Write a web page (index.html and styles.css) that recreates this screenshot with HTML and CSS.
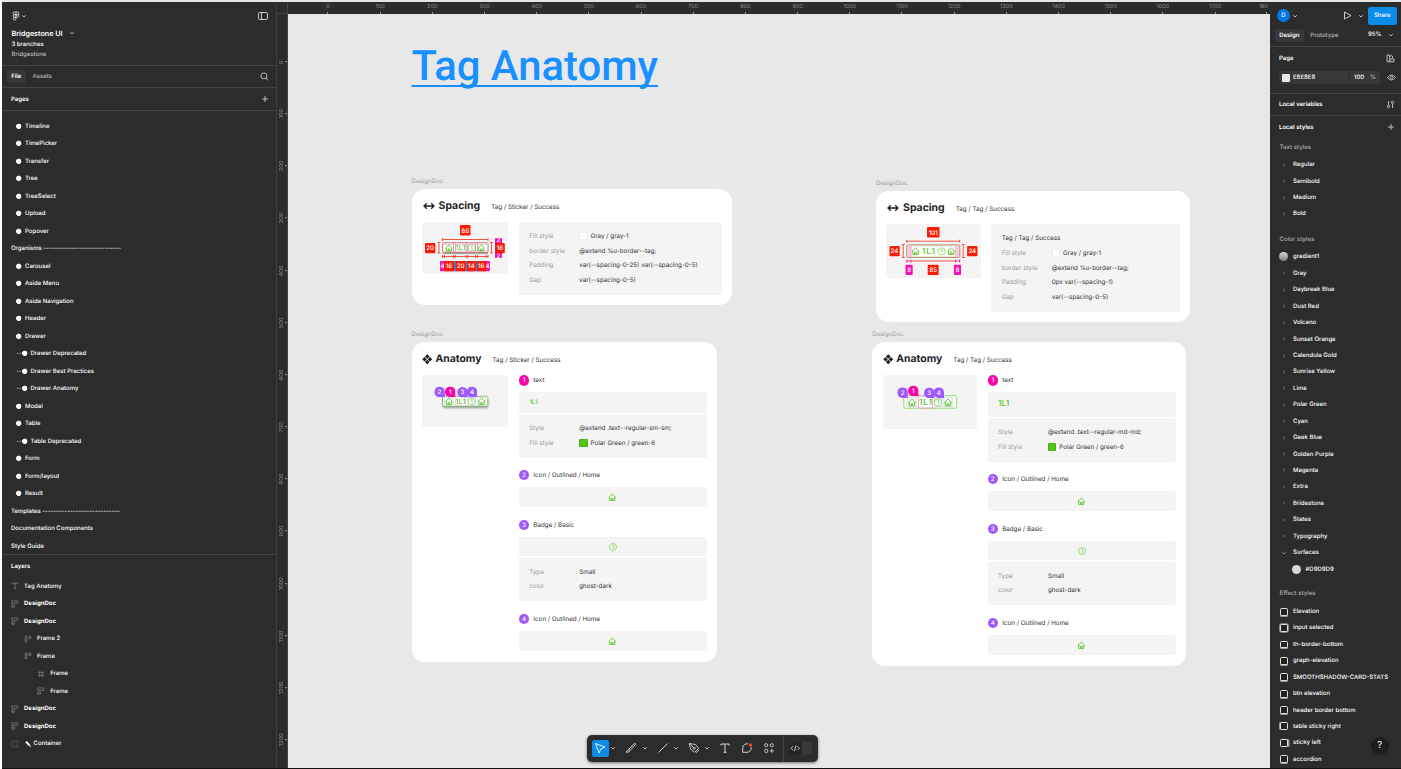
FILE: index.html
```html
<!DOCTYPE html>
<html lang="en">
<head>
<meta charset="utf-8">
<title>Bridgestone UI</title>
<link rel="stylesheet" href="styles.css">
</head>
<body>
<svg class="defs" aria-hidden="true">
  <symbol id="chev" viewBox="0 0 6 6"><path d="M1.3 2.3 3 4l1.7-1.7" fill="none" stroke="currentColor" stroke-width=".9"/></symbol>
  <symbol id="chev-r" viewBox="0 0 6 6"><path d="M2.2 1.5 3.7 3 2.2 4.5" fill="none" stroke="currentColor" stroke-width=".7"/></symbol>
  <symbol id="plus" viewBox="0 0 8 8"><path d="M4 1v6M1 4h6" stroke="currentColor" stroke-width=".8"/></symbol>
  <symbol id="home" viewBox="0 0 10 10"><path d="M.9 5.3 5 1.3l4.100 4M2 4.600V8.600h6V4.600M4.100 8.400V6.200h1.800V8.400" fill="none" stroke="currentColor" stroke-width="1" stroke-linejoin="round"/></symbol>
  <symbol id="hframe" viewBox="0 0 8 8"><path d="M.8 1h6v2.300h-6zM.8 5h2.600v2.200H.8z" fill="none" stroke="currentColor" stroke-width=".7"/></symbol>
  <symbol id="vframe" viewBox="0 0 8 8"><path d="M1.200 1.200h1.800v5.600H1.200zM5 1.200h1.800v2.300H5z" fill="none" stroke="currentColor" stroke-width=".7"/></symbol>
  <symbol id="grid" viewBox="0 0 8 8"><path d="M2.600 1v6M5.400 1v6M1 2.600h6M1 5.400h6" stroke="currentColor" stroke-width=".6"/></symbol>
  <symbol id="arrows" viewBox="0 0 12 8"><path d="M1.200 4h9.600M3.800 1.200 1 4l2.800 2.800M8.200 1.200 11 4 8.200 6.800" fill="none" stroke="currentColor" stroke-width="1.300"/></symbol>
  <symbol id="parts" viewBox="0 0 10 10"><path d="M5 .2 7.200 2.400 5 4.600 2.800 2.400zM5 5.400 7.200 7.600 5 9.800 2.800 7.600zM.2 5l2.200-2.200L4.600 5 2.400 7.200zM5.400 5l2.200-2.200L9.800 5 7.600 7.200z" fill="currentColor"/></symbol>
  <symbol id="pin" viewBox="0 0 11 11"><path d="M5.500 0A5.500 5.500 0 1 0 5.500 11H11V5.500A5.500 5.500 0 0 0 5.500 0z" fill="currentColor"/></symbol>
</svg>

<div class="app">
  <aside class="left">
    <header class="file-head">
      <div class="file-bar">
        <svg class="logo" viewBox="0 0 8 10"><path d="M4 1H2.400a1.350 1.350 0 0 0 0 2.700H4zM4 1h1.600a1.350 1.350 0 0 1 0 2.700H4M4 3.700H2.400a1.350 1.350 0 0 0 0 2.700H4zM5.500 3.700a1.350 1.350 0 1 1-.01 0M4 6.400H2.400A1.350 1.350 0 1 0 4 7.700z" fill="none" stroke="currentColor" stroke-width=".8"/></svg>
        <svg class="chev"><use href="#chev"/></svg>
        <svg class="panel-icon" viewBox="0 0 10 8"><rect x=".5" y=".5" width="9" height="7" rx="1.200" fill="none" stroke="currentColor" stroke-width=".9"/><path d="M3.500 .5v7" stroke="currentColor" stroke-width=".9"/></svg>
      </div>
      <div class="file-name">Bridgestone UI <svg class="chev"><use href="#chev"/></svg></div>
      <div class="branches">3 branches</div>
      <div class="team">Bridgestone</div>
    </header>
    <nav class="tabs">
      <span class="tab active">File</span><span class="tab">Assets</span>
      <svg class="search" viewBox="0 0 9 9"><circle cx="3.900" cy="3.900" r="3" fill="none" stroke="currentColor" stroke-width=".8"/><path d="m6.100 6.100 2.300 2.300" stroke="currentColor" stroke-width=".8"/></svg>
    </nav>
    <div class="pages-head">Pages <svg class="plus"><use href="#plus"/></svg></div>
    <ul class="pages">
      <li><i></i>Timeline</li>
      <li><i></i>TimePicker</li>
      <li><i></i>Transfer</li>
      <li><i></i>Tree</li>
      <li><i></i>TreeSelect</li>
      <li><i></i>Upload</li>
      <li><i></i>Popover</li>
      <li class="top">Organisms <span class="dash">----------------------------</span></li>
      <li><i></i>Carousel</li>
      <li><i></i>Aside Menu</li>
      <li><i></i>Aside Navigation</li>
      <li><i></i>Header</li>
      <li><i></i>Drawer</li>
      <li><b>--</b><i></i>Drawer Deprecated</li>
      <li><b>--</b><i></i>Drawer Best Practices</li>
      <li><b>--</b><i></i>Drawer Anatomy</li>
      <li><i></i>Modal</li>
      <li><i></i>Table</li>
      <li><b>--</b><i></i>Table Deprecated</li>
      <li><i></i>Form</li>
      <li><i></i>Form/layout</li>
      <li><i></i>Result</li>
      <li class="top">Templates <span class="dash">----------------------------</span></li>
      <li class="top">Documentation Components</li>
      <li class="top">Style Guide</li>
    </ul>
    <div class="layers-head">Layers</div>
    <ul class="layers">
      <li><svg viewBox="0 0 8 8"><path d="M1.200 2.300V1.200h5.600v1.100M4 1.200v5.600M3 6.800h2" fill="none" stroke="currentColor" stroke-width=".7"/></svg>Tag Anatomy</li>
      <li class="strong"><svg><use href="#hframe"/></svg>DesignDoc</li>
      <li class="strong"><svg><use href="#hframe"/></svg>DesignDoc</li>
      <li class="l2"><svg><use href="#vframe"/></svg>Frame 2</li>
      <li class="l2"><svg><use href="#vframe"/></svg>Frame</li>
      <li class="l3"><svg><use href="#grid"/></svg>Frame</li>
      <li class="l3"><svg><use href="#hframe"/></svg>Frame</li>
      <li class="strong"><svg><use href="#hframe"/></svg>DesignDoc</li>
      <li class="strong"><svg><use href="#hframe"/></svg>DesignDoc</li>
      <li><svg viewBox="0 0 8 8"><rect x="1.200" y="1.200" width="5.600" height="5.600" fill="none" stroke="currentColor" stroke-width=".6" stroke-dasharray="1.200 .8"/></svg><svg class="pencil" viewBox="0 0 8 8"><path d="m2 1.800 3.800 3.800" stroke="#fff" stroke-width="2"/><path d="m5.500 5.300 1.200 1.500" stroke="#fff" stroke-width="1"/></svg>Container</li>
    </ul>
  </aside>

  <div class="vruler">
    <span>0</span><span>100</span><span>200</span><span>300</span><span>400</span><span>500</span><span>600</span><span>700</span><span>800</span><span>900</span><span>1000</span><span>1100</span><span>1200</span><span>1300</span>
  </div>

  <main class="stage">
    <div class="hruler">
      <span>0</span><span>100</span><span>200</span><span>300</span><span>400</span><span>500</span><span>600</span><span>700</span><span>800</span><span>900</span><span>1000</span><span>1100</span><span>1200</span><span>1300</span><span>1400</span><span>1500</span><span>1600</span><span>1700</span><span class="end">180</span>
    </div>
    <div class="canvas">
      <h1 class="title">Tag Anatomy</h1>

      <section class="frame f1">
        <div class="frame-label">DesignDoc</div>
        <div class="card">
          <div class="card-head"><svg class="arrows"><use href="#arrows"/></svg><h2>Spacing</h2><span>Tag / Sticker / Success</span></div>
          <div class="card-body">
            <svg class="preview p86" viewBox="422 222 86.500 52">
              <g stroke="#f4442e" stroke-width=".9" fill="none">
                <path d="M442.500 239.500H488M442.500 238v3M488 238v3M439 242.500v10.500M437.500 242.500h3M437.500 253h3M491.500 242.500v10.500M490 242.500h3M490 253h3M442.500 256.500H488M442.500 255v3M444.500 255v3M453.500 255v3M455.500 255v3M466 255v3M468 255v3M475.500 255v3M477.500 255v3M486 255v3M488 255v3"/>
              </g>
              <path d="M443 252.500h45v1.800h-45z" fill="#aaa"/>
              <rect x="442.500" y="242.800" width="45.500" height="9.700" rx="1" fill="#fff" stroke="#bd6a63" stroke-width=".9"/>
              <path d="M453.500 243v9.500M455.500 243v9.500M466 243v9.500M467.500 243v9.500M475.500 243v9.500M477.500 243v9.500" stroke="#df8fb0" stroke-width=".8"/>
              <path d="M442.500 244.300h45.500M442.500 251h45.500" stroke="#f6a6d8" stroke-width=".7"/>
              <g class="green"><use href="#home" x="444.700" y="243.700" width="8.600" height="8.600"/><use href="#home" x="477" y="243.700" width="8.600" height="8.600"/>
              <text class="t" x="460.600" y="250.200" font-size="6.800" textLength="10">1L1</text><circle cx="471.500" cy="248" r="3.400"/><text class="t" x="471.500" y="249.900" font-size="5">1</text></g>
              <rect x="495" y="238" width="7" height="20" rx="1" fill="#f312b4"/>
              <rect x="440" y="261" width="50" height="10.300" rx="1" fill="#f312b4"/>
              <path d="M454 261h2v10.300h-2zM465.500 261h2v10.300h-2zM475.500 261h2v10.300h-2z" fill="#1890ff"/>
              <g class="num"><text x="498.500" y="242.300">2</text><text x="498.500" y="257.800">2</text><text x="442.600" y="268.400">4</text><text x="487.600" y="268.400">4</text></g>
              <g fill="#f61d06"><rect x="460" y="225" width="10.500" height="10.500" rx="1"/><rect x="425" y="243" width="10.300" height="10.300" rx="1"/><rect x="495.300" y="243" width="9.500" height="10.300" rx="1"/><rect x="444" y="261" width="10.200" height="10.300" rx="1"/><rect x="455.700" y="261" width="10" height="10.300" rx="1"/><rect x="467" y="261" width="9" height="10.300" rx="1"/><rect x="477" y="261" width="9" height="10.300" rx="1"/></g>
              <g class="num"><text x="465.200" y="232.500">86</text><text x="430.200" y="250.300">20</text><text x="500" y="250.300">16</text><text x="449" y="268.400">16</text><text x="460.600" y="268.400">20</text><text x="471.400" y="268.400">14</text><text x="481.200" y="268.400">16</text></g>
            </svg>
            <div class="specs">
              <dl><dt>Fill style</dt><dd><em></em>Gray / gray-1</dd></dl>
              <dl><dt>border style</dt><dd>@extend %u-border--tag;</dd></dl>
              <dl><dt>Padding</dt><dd>var(--spacing-0-25) var(--spacing-0-5)</dd></dl>
              <dl><dt>Gap</dt><dd>var(--spacing-0-5)</dd></dl>
            </div>
          </div>
        </div>
      </section>

      <section class="frame f2">
        <div class="frame-label">DesignDoc</div>
        <div class="card">
          <div class="card-head"><svg class="arrows"><use href="#arrows"/></svg><h2>Spacing</h2><span>Tag / Tag / Success</span></div>
          <div class="card-body">
            <svg class="preview p94" viewBox="886.500 224 94.500 54">
              <path d="M907 241.200h53.500M907.300 239.700v3M960.200 239.700v3M903.700 244.500v13M902.300 244.500h3M902.300 257.500h3M963.700 244.500v13M962.300 244.500h3M962.300 257.500h3M911.500 261h44.500M911.500 259.500v3M956 259.500v3" stroke="#f4442e" stroke-width=".9" fill="none"/>
              <path d="M907.300 259.500v3M907 261h4.500M956 261h4.500M960.300 259.500v3" stroke="#f312b4" stroke-width=".9" fill="none"/>
              <rect x="907.300" y="245" width="53" height="12.300" rx="1" fill="#fff" stroke="#93793f" stroke-width=".9"/>
              <path d="M908 245.600h3.700v11.200H908zM956 245.600h3.700v11.200H956z" fill="#fbc6ec"/>
              <path d="M911.800 245v12.300M956 245v12.300" stroke="#f59c9c" stroke-width=".6"/>
              <g class="green"><use href="#home" x="911.500" y="246.700" width="9" height="9"/><use href="#home" x="947.200" y="246.700" width="9" height="9"/>
              <text class="t" x="928.900" y="254" font-size="8.300" textLength="13">1L1</text><circle cx="942" cy="251.300" r="3.600"/><text class="t" x="942" y="253.200" font-size="5.300">1</text></g>
              <g fill="#f61d06"><rect x="927.500" y="227" width="12.500" height="10.500" rx="1"/><rect x="890" y="246" width="10.200" height="10.300" rx="1"/><rect x="967.600" y="246" width="10.400" height="10.300" rx="1"/><rect x="928.200" y="264.700" width="11" height="10.300" rx="1"/></g>
              <g fill="#f312b4"><rect x="906" y="264.700" width="7.200" height="10.300" rx="1"/><rect x="954.400" y="264.700" width="7.200" height="10.300" rx="1"/></g>
              <g class="num"><text x="933.700" y="234.600">101</text><text x="895" y="253.400">24</text><text x="972.800" y="253.400">24</text><text x="909.600" y="272">8</text><text x="933.700" y="272">85</text><text x="958" y="272">8</text></g>
            </svg>
            <div class="specs">
              <dl><dd>Tag / Tag / Success</dd></dl>
              <dl><dt>Fill style</dt><dd><em></em>Gray / gray-1</dd></dl>
              <dl><dt>border style</dt><dd>@extend %u-border--tag;</dd></dl>
              <dl><dt>Padding</dt><dd>0px var(--spacing-1)</dd></dl>
              <dl><dt>Gap</dt><dd>var(--spacing-0-5)</dd></dl>
            </div>
          </div>
        </div>
      </section>

      <section class="frame f3">
        <div class="frame-label">DesignDoc</div>
        <div class="card">
          <div class="card-head"><svg class="parts"><use href="#parts"/></svg><h2>Anatomy</h2><span>Tag / Sticker / Success</span></div>
          <div class="card-body">
            <svg class="preview p86" viewBox="422 375 86.500 52">
              <rect class="shade" x="443" y="399" width="45" height="9" rx="1.500"/>
              <rect x="442.500" y="396.200" width="45.300" height="10" rx="1.500" fill="#fff" stroke="#6fc24a" stroke-width=".9"/>
              <path d="M444.500 397.500h8.500v8h-8.500zM477.200 397.500h8.500v8h-8.500zM467.500 397.500h7.800v8h-7.800z" fill="none" stroke="#d9bdf7" stroke-width=".6"/>
              <rect x="455.300" y="396.800" width="10.400" height="9" fill="none" stroke="#f5b3dc" stroke-width=".6"/>
              <g class="green"><use href="#home" x="444.700" y="397" width="8.600" height="8.600"/><use href="#home" x="477.200" y="397" width="8.600" height="8.600"/>
              <text class="t" x="460.600" y="403.700" font-size="6.800" textLength="10">1L1</text><circle cx="471.500" cy="401.300" r="3.400"/><text class="t" x="471.500" y="403.200" font-size="5">1</text></g>
              <g color="#9d58ff"><use href="#pin" x="434.300" y="386.600" width="10.600" height="10.600"/><use href="#pin" x="457.200" y="387" width="10.600" height="10.600"/><use href="#pin" x="466.700" y="386.600" width="10.600" height="10.600"/></g>
              <use href="#pin" x="444.900" y="386.400" width="10.600" height="10.600" color="#f706a8"/>
              <g class="num"><text x="439.500" y="394">2</text><text x="450.200" y="393.900">1</text><text x="462.400" y="394.400">3</text><text x="472" y="394">4</text></g>
            </svg>
            <div class="anatomy">
              <section><h3><i class="pink">1</i>text</h3><div class="sample sm">1L1</div>
                <div class="specs"><dl><dt>Style</dt><dd>@extend .text--regular-sm-sm;</dd></dl><dl><dt>Fill style</dt><dd><em class="g"></em>Polar Green / green-6</dd></dl></div></section>
              <section><h3><i>2</i>Icon / Outlined / Home</h3><div class="sample mid"><svg class="home"><use href="#home"/></svg></div></section>
              <section><h3><i>3</i>Badge / Basic</h3><div class="sample mid short"><svg class="badge green" viewBox="0 0 8 8"><circle cx="4" cy="4" r="3.500"/><text class="t" x="4" y="5.900" font-size="5.300">1</text></svg></div>
                <div class="specs"><dl><dt>Type</dt><dd>Small</dd></dl><dl><dt>color</dt><dd>ghost-dark</dd></dl></div></section>
              <section><h3><i>4</i>Icon / Outlined / Home</h3><div class="sample mid"><svg class="home"><use href="#home"/></svg></div></section>
            </div>
          </div>
        </div>
      </section>

      <section class="frame f4">
        <div class="frame-label">DesignDoc</div>
        <div class="card">
          <div class="card-head"><svg class="parts"><use href="#parts"/></svg><h2>Anatomy</h2><span>Tag / Tag / Success</span></div>
          <div class="card-body">
            <svg class="preview p94" viewBox="883 375 94.500 54">
              <rect x="903.800" y="395.700" width="53" height="12.500" rx="1.800" fill="#f9fbf8" stroke="#86d75f" stroke-width=".9"/>
              <path d="M907.700 397.800h8.500v8.800h-8.500zM943.800 397.800h8.500v8.800h-8.500zM934.300 398.500h7.600v8h-7.600z" fill="none" stroke="#d9bdf7" stroke-width=".6"/>
              <rect x="918.500" y="395.900" width="14" height="12.200" fill="none" stroke="#f08fc5" stroke-width=".7"/>
              <g class="green"><use href="#home" x="907.500" y="398" width="9" height="9"/><use href="#home" x="943.600" y="398" width="9" height="9"/>
              <text class="t" x="925.500" y="405.200" font-size="8.300" textLength="13">1L1</text><circle cx="938" cy="402.400" r="3.600"/><text class="t" x="938" y="404.300" font-size="5.300">1</text></g>
              <g color="#9d58ff"><use href="#pin" x="897.300" y="387.300" width="10.600" height="10.600"/><use href="#pin" x="924" y="387.600" width="10.600" height="10.600"/><use href="#pin" x="933.500" y="387.300" width="10.600" height="10.600"/></g>
              <use href="#pin" x="908" y="385.600" width="10.600" height="10.600" color="#f706a8"/>
              <g class="num"><text x="902.600" y="394.800">2</text><text x="913.200" y="393.100">1</text><text x="929.200" y="395.200">3</text><text x="938.700" y="394.800">4</text></g>
            </svg>
            <div class="anatomy">
              <section><h3><i class="pink">1</i>text</h3><div class="sample md">1L1</div>
                <div class="specs"><dl><dt>Style</dt><dd>@extend .text--regular-md-md;</dd></dl><dl><dt>Fill style</dt><dd><em class="g"></em>Polar Green / green-6</dd></dl></div></section>
              <section><h3><i>2</i>Icon / Outlined / Home</h3><div class="sample mid"><svg class="home"><use href="#home"/></svg></div></section>
              <section><h3><i>3</i>Badge / Basic</h3><div class="sample mid short"><svg class="badge green" viewBox="0 0 8 8"><circle cx="4" cy="4" r="3.500"/><text class="t" x="4" y="5.900" font-size="5.300">1</text></svg></div>
                <div class="specs"><dl><dt>Type</dt><dd>Small</dd></dl><dl><dt>color</dt><dd>ghost-dark</dd></dl></div></section>
              <section><h3><i>4</i>Icon / Outlined / Home</h3><div class="sample mid"><svg class="home"><use href="#home"/></svg></div></section>
            </div>
          </div>
        </div>
      </section>

      <div class="toolbar">
        <span class="tool on"><svg viewBox="0 0 14 14"><path d="M2.600 2.600 12 6 7.900 7.900 6 12z" fill="none" stroke="#fff" stroke-width=".9" stroke-linejoin="round"/></svg></span><svg class="chev"><use href="#chev"/></svg>
        <span class="tool"><svg viewBox="0 0 14 14"><path d="M4.600 8.300 10.300 2.600q1.500-.6 1.200 1L6 9.500zM4.600 8.300Q3.300 8.500 2.400 11.300 5.500 11.500 6 9.500" fill="none" stroke="currentColor" stroke-width=".9"/></svg></span><svg class="chev"><use href="#chev"/></svg>
        <span class="tool"><svg viewBox="0 0 14 14"><path d="m2.500 11.500 9-9" stroke="currentColor" stroke-width=".9"/></svg></span><svg class="chev"><use href="#chev"/></svg>
        <span class="tool"><svg viewBox="0 0 14 14"><path d="M2.300 2.500 3.600 8.300 7.500 11.300 11.600 7.500 8.700 3.600zM2.300 2.500 6.500 6.700M9 11.800 12 9" fill="none" stroke="currentColor" stroke-width=".8" stroke-linejoin="round"/><circle cx="7.200" cy="7.200" r="1.100" fill="none" stroke="currentColor" stroke-width=".8"/></svg></span><svg class="chev"><use href="#chev"/></svg>
        <span class="tool"><svg viewBox="0 0 14 14"><path d="M3 4.500V3h8v1.500M7 3v8.300M5.500 11.300h3" fill="none" stroke="currentColor" stroke-width=".9"/></svg></span>
        <span class="tool"><svg viewBox="0 0 14 14"><path d="M8 2.900A4.300 4.300 0 0 0 2.700 7v4.300H7A4.300 4.300 0 0 0 11.200 6.200" fill="none" stroke="currentColor" stroke-width=".9"/><circle cx="10.500" cy="4" r="1.700" fill="#f24822"/></svg></span>
        <span class="tool"><svg viewBox="0 0 14 14"><g fill="none" stroke="currentColor" stroke-width=".8"><circle cx="4.200" cy="4.200" r="1.600"/><circle cx="9.800" cy="4.200" r="1.600"/><rect x="2.700" y="8.400" width="3" height="3" rx=".8"/><path d="M9.800 7.900v4M7.800 9.900h4"/></g></svg></span>
        <span class="rule"></span>
        <span class="dev"><svg viewBox="0 0 12 12"><path d="M4 4 2 6l2 2M8 4l2 2-2 2M6.700 3.300 5.300 8.700" fill="none" stroke="currentColor" stroke-width=".8"/></svg></span>
      </div>
    </div>
  </main>

  <aside class="right">
    <div class="user-bar"><span class="avatar">D</span><svg class="chev"><use href="#chev"/></svg>
      <svg class="play" viewBox="0 0 9 9"><path d="M1.500 1 8 4.500 1.500 8z" fill="none" stroke="currentColor" stroke-width=".9" stroke-linejoin="round"/></svg><svg class="chev"><use href="#chev"/></svg><span class="share">Share</span></div>
    <nav class="rtabs"><span class="tab active">Design</span><span class="tab">Prototype</span><span class="zoom">95%</span><svg class="chev"><use href="#chev"/></svg></nav>
    <div class="rhead page"><span>Page</span><svg viewBox="0 0 9 9"><path d="M1 1h2.600v6.800H1zM3.600 3 5.500 1.300 7 3 3.600 7M5.500 5H8v2.800H3.500" fill="none" stroke="currentColor" stroke-width=".8"/></svg></div>
    <div class="fill-row"><div class="field"><em></em><span class="hex">E8E8E8</span><span class="pct">100</span><span class="unit">%</span></div>
      <svg viewBox="0 0 9 9"><path d="M.5 4.500q4-5 8 0-4 5-8 0z" fill="none" stroke="currentColor" stroke-width=".8"/><circle cx="4.500" cy="4.500" r="1.300" fill="none" stroke="currentColor" stroke-width=".8"/></svg></div>
    <div class="rhead vars"><span>Local variables</span><svg viewBox="0 0 9 9"><path d="M2.500 1v4.300M6.500 3.800V8" stroke="currentColor" stroke-width=".8"/><circle cx="2.500" cy="6.500" r="1.200" fill="none" stroke="currentColor" stroke-width=".8"/><circle cx="6.500" cy="2.500" r="1.200" fill="none" stroke="currentColor" stroke-width=".8"/></svg></div>
    <div class="rhead styles"><span>Local styles</span><svg><use href="#plus"/></svg></div>
    <h4>Text styles</h4>
    <ul class="styles-list">
      <li><svg><use href="#chev-r"/></svg>Regular</li>
      <li><svg><use href="#chev-r"/></svg>Semibold</li>
      <li><svg><use href="#chev-r"/></svg>Medium</li>
      <li><svg><use href="#chev-r"/></svg>Bold</li>
    </ul>
    <h4 class="color-head">Color styles</h4>
    <ul class="styles-list">
      <li><i class="grad"></i>gradient1</li>
      <li><svg><use href="#chev-r"/></svg>Gray</li>
      <li><svg><use href="#chev-r"/></svg>Daybreak Blue</li>
      <li><svg><use href="#chev-r"/></svg>Dust Red</li>
      <li><svg><use href="#chev-r"/></svg>Volcano</li>
      <li><svg><use href="#chev-r"/></svg>Sunset Orange</li>
      <li><svg><use href="#chev-r"/></svg>Calendula Gold</li>
      <li><svg><use href="#chev-r"/></svg>Sunrise Yellow</li>
      <li><svg><use href="#chev-r"/></svg>Lime</li>
      <li><svg><use href="#chev-r"/></svg>Polar Green</li>
      <li><svg><use href="#chev-r"/></svg>Cyan</li>
      <li><svg><use href="#chev-r"/></svg>Geek Blue</li>
      <li><svg><use href="#chev-r"/></svg>Golden Purple</li>
      <li><svg><use href="#chev-r"/></svg>Magenta</li>
      <li><svg><use href="#chev-r"/></svg>Extra</li>
      <li><svg><use href="#chev-r"/></svg>Bridestone</li>
      <li><svg><use href="#chev-r"/></svg>States</li>
      <li><svg><use href="#chev-r"/></svg>Typography</li>
      <li><svg><use href="#chev"/></svg>Surfaces</li>
      <li class="sub"><i class="solid"></i>#D9D9D9</li>
    </ul>
    <h4 class="fx-head">Effect styles</h4>
    <ul class="styles-list fx">
      <li><i></i>Elevation</li>
      <li><i class="all"></i>input selected</li>
      <li><i class="thin"></i>th-border-bottom</li>
      <li><i></i>graph-elevation</li>
      <li><i></i>SMOOTHSHADOW-CARD-STATS</li>
      <li><i></i>btn elevation</li>
      <li><i></i>header border bottom</li>
      <li><i class="lft"></i>table sticky right</li>
      <li><i class="rgt"></i>sticky left</li>
      <li><i></i>accordion</li>
    </ul>
    <span class="help">?</span>
  </aside>
</div>
</body>
</html>
```
FILE: styles.css
```css
* { box-sizing: border-box; margin: 0; padding: 0; }
body { background: #fff; font-family: Inter, "Liberation Sans", sans-serif; font-size: 6px; font-weight: 550; color: #fff; width: 1401px; height: 769px; overflow: hidden; text-rendering: geometricPrecision; }
ul { list-style: none; }
svg { display: block; flex: none; }
.defs { position: absolute; width: 0; height: 0; }
.app { display: flex; height: 769px; margin: 0 0 0 2px; padding-top: 1px; border-top: 2px solid #e6e6e6; border-bottom: 1px solid #111; background: #2c2c2c; }
.chev { width: 6px; height: 6px; color: #d0d0d0; }

/* left panel */
.left { width: 275px; flex: none; border-right: 1px solid #3e3e3e; display: flex; flex-direction: column; white-space: nowrap; }
.file-head { height: 63px; border-bottom: 1px solid #444; padding: 7px 8px 0 9.500px; }
.file-bar { display: flex; align-items: center; height: 11px; }
.logo { width: 8px; height: 10px; color: #e8e8e8; }
.file-bar .chev { margin-left: 1.500px; }
.panel-icon { width: 10px; height: 8px; margin-left: auto; color: #ddd; }
.file-name { display: flex; align-items: center; gap: 6.500px; height: 12px; margin-top: 6.300px; font-size: 7.150px; font-weight: 600; }
.branches { height: 10px; line-height: 11.500px; }
.team { height: 10px; line-height: 12px; color: #bdbdbd; }
.tabs { display: flex; align-items: center; height: 22px; border-bottom: 1px solid #444; padding: 0 7px 0 5px; }
.tab { height: 13px; line-height: 14px; padding: 0 5px; border-radius: 2.500px; color: #b8b8b8; }
.tab.active { background: #383838; color: #fff; font-weight: 600; }
.tabs .tab { padding: 0 4.200px; }
.tabs .tab + .tab { margin-left: 2.800px; }
.search { width: 9px; height: 9px; margin-left: auto; color: #ddd; }
.pages-head { display: flex; align-items: center; justify-content: space-between; height: 23px; border-bottom: 1px solid #444; padding: 0 7.500px 0 9px; font-weight: 600; }
.plus { width: 8px; height: 8px; color: #ddd; }
.pages { height: 443px; padding: 6.600px 0 0 14.300px; }
.pages li { display: flex; align-items: center; height: 17.500px; }
.pages li i { width: 8.700px; height: 7px; background: radial-gradient(circle at 2.700px 3.300px, #fff 2.300px, #fff0 3px); }
.pages li b { width: 5px; font-weight: 500; letter-spacing: -.4px; margin-right: .5px; color: #ccc; }
.pages li.top { margin-left: -5.300px; }
.pages .dash { margin-left: 1.500px; }
.layers-head { height: 23px; line-height: 23px; border-top: 1px solid #444; padding-left: 9px; font-weight: 600; }
.layers { flex: 1; padding-top: .400px; }
.layers li { display: flex; align-items: center; height: 17.500px; padding-left: 9px; }
.layers svg { width: 8px; height: 8px; margin-right: 5px; color: #8a8a8a; }
.layers .pencil { margin-right: 1.500px; }
.layers .strong { font-weight: 650; }
.layers .l2 { padding-left: 22px; }
.layers .l3 { padding-left: 35.200px; }

/* rulers */
.vruler { width: 11px; flex: none; border-right: 1px solid #444; padding-top: 32.800px; background: linear-gradient(#444, #444) 0 10px / 11px 1px no-repeat; font-size: 5.500px; font-weight: 400; color: #8a8a8a; overflow: hidden; }
.vruler span { display: block; height: 52.200px; line-height: 10px; writing-mode: vertical-rl; transform: rotate(180deg); text-align: center; background: linear-gradient(#999, #999) 0 50% / 2px 1px no-repeat; }
.stage { flex: none; width: 982px; display: flex; flex-direction: column; overflow: hidden; }
.hruler { height: 11px; flex: none; display: flex; padding-left: 13.800px; font-size: 5.500px; font-weight: 400; color: #8a8a8a; line-height: 8.600px; }
.hruler span { flex: none; width: 52.200px; text-align: center; background: linear-gradient(#999, #999) 50% 100% / 1px 2px no-repeat; }
.hruler span.end { width: 10.500px; margin-left: 17.900px; text-align: left; background-position: 78% 100%; letter-spacing: -.2px; }

/* canvas */
.canvas { position: relative; flex: 1; background: #e8e8e8; color: #333; font-weight: 400; }
.title { position: absolute; left: 123.500px; top: 28px; font: 500 41.800px/50px Roboto, sans-serif; color: #1890ff; text-decoration: underline; text-decoration-thickness: 2px; text-underline-offset: 4.600px; text-decoration-skip-ink: none; white-space: nowrap; }
.frame { position: absolute; }
.f1 { left: 123.500px; top: 162px; width: 320.500px; }
.f2 { left: 588px; top: 164.300px; width: 314px; }
.f3 { left: 123.500px; top: 315.300px; width: 305.500px; }
.f4 { left: 584.300px; top: 315.300px; width: 314px; }
.frame-label { height: 12.700px; line-height: 11px; font-size: 6.100px; color: #999; }
.card { background: #fff; border-radius: 13px; padding: 10.400px; }
.card-head { display: flex; align-items: center; height: 13px; margin-bottom: 9.800px; white-space: nowrap; }
.card-head h2 { font-size: 10.450px; font-weight: 650; line-height: 13px; color: #1f1f1f; }
.card-head span { margin-left: 11px; padding-top: 2px; font-size: 6.270px; }
.arrows { width: 12px; height: 8px; margin: 0 4px 0 .700px; color: #1f1f1f; }
.parts { width: 10.500px; height: 10.500px; margin-right: 3px; color: #1f1f1f; }
.card-body { display: flex; align-items: flex-start; gap: 10.400px; }
.preview { background: #f4f4f4; border-radius: 2.500px; }
.p86 { width: 86.500px; height: 52px; }
.p94 { width: 94.500px; height: 54px; }
.green { color: #52c41a; }
.green .t { fill: #52c41a; font-weight: 500; text-anchor: middle; }
.green circle { fill: none; stroke: #73d13d; stroke-width: .7; }
.num text { fill: #fff; font-size: 6.200px; font-weight: 500; text-anchor: middle; }
.shade { fill: #0006; filter: blur(1.200px); }
.specs { flex: 1; background: #f4f4f4; border-radius: 2.500px; padding: 7px 10.400px 7.600px; font-size: 6.270px; }
.specs dl { display: flex; align-items: center; height: 14.650px; white-space: nowrap; }
.specs dt { width: 50px; color: #999; }
.specs dd { display: flex; align-items: center; }
.specs em { flex: none; width: 8.400px; height: 8.400px; border-radius: 1.500px; background: #fff; box-shadow: inset 0 0 0 .6px #dedede; margin-right: 3px; }
.specs em.g { background: #52c41a; box-shadow: inset 0 0 0 .6px #3fa80e; }
.anatomy { flex: 1; display: flex; flex-direction: column; gap: 12.600px; }
.anatomy h3 { display: flex; align-items: center; gap: 4.200px; height: 10.400px; margin-bottom: 6.400px; font-size: 6.270px; font-weight: 400; }
.anatomy h3 i { width: 10.400px; height: 10.400px; border-radius: 50%; background: #9d58ff; color: #fff; font-style: normal; font-weight: 500; text-align: center; line-height: 10.400px; }
.anatomy h3 i.pink { background: #f706a8; }
.sample { display: flex; align-items: center; height: 20.600px; padding: 0 10.400px; border-radius: 2.500px; background: #f4f4f4; color: #52c41a; font-weight: 500; }
.sample.sm { font-size: 6.300px; }
.sample.md { height: 24.600px; font-size: 8.300px; }
.sample.mid { justify-content: center; }
.sample.short { height: 19.400px; }
.home { width: 8.600px; height: 8.600px; }
.badge { width: 8px; height: 8px; }
.anatomy .specs { margin-top: 1.700px; padding: 6.600px 10.400px 7.400px; }

/* bottom toolbar */
.toolbar { position: absolute; left: 299px; top: 721px; width: 230.500px; height: 26.500px; display: flex; align-items: center; padding-left: 4.500px; border-radius: 5px; background: #2c2c2c; box-shadow: 0 1px 3px #0008; color: #e6e6e6; }
.tool { width: 17.400px; height: 17.400px; display: grid; place-items: center; border-radius: 2.500px; }
.tool.on { background: #0c8ce9; }
.tool svg { width: 14px; height: 14px; }
.toolbar .chev { margin: 0 6.400px 0 1.500px; }
.tool + .tool { margin-left: 4.500px; }
.rule { width: 1px; height: 26.500px; margin-left: 5px; background: #444; }
.dev { width: 22.500px; height: 12.500px; margin-left: 5.500px; border-radius: 2.500px; background: #383838; }
.dev svg { width: 12.500px; height: 12.500px; border-radius: 2.500px; background: #242424; }

/* right panel */
.right { position: relative; flex: 1; min-width: 0; white-space: nowrap; }
.user-bar { display: flex; align-items: center; height: 25px; padding: .500px 4px 0 7px; }
.avatar { width: 13px; height: 13px; border-radius: 50%; background: #007be5; text-align: center; line-height: 13px; }
.user-bar .chev { margin-left: 2px; }
.play { width: 9px; height: 9px; margin-left: auto; color: #ddd; }
.user-bar .play + .chev { margin-left: 6px; }
.share { width: 29.500px; height: 17.500px; margin-left: 4px; border-radius: 2.500px; background: #0c8ce9; text-align: center; line-height: 18px; }
.rtabs { display: flex; align-items: center; height: 19px; padding: 0 7px 4px 5px; border-bottom: 1px solid #444; }
.rtabs .tab { padding: 0 4.200px; }
.rtabs .tab + .tab { margin-left: 2.600px; }
.zoom { margin-left: auto; margin-right: 6.500px; line-height: 14px; }
.rhead { display: flex; align-items: center; justify-content: space-between; padding: 0 6px 0 9px; font-weight: 600; }
.rhead svg, .fill-row svg { width: 9px; height: 9px; color: #ddd; }
.rhead span { padding-top: .600px; }
.page { height: 22px; }
.fill-row { display: flex; align-items: center; justify-content: space-between; height: 25px; padding: 0 5.500px 7px 9px; border-bottom: 1px solid #444; }
.field { display: flex; align-items: center; width: 101px; height: 13px; border-radius: 2.500px; background: #383838; padding-left: 3px; line-height: 14px; }
.field em { width: 8px; height: 8px; border-radius: 1px; background: #e8e8e8; margin-right: 3px; }
.hex { width: 56px; }
.pct { width: 23px; border-left: 1px solid #2c2c2c; padding-left: 4px; }
.hex + .pct + .unit { margin-left: -2px; color: #b8b8b8; }
.vars { height: 22px; border-bottom: 1px solid #444; }
.styles { height: 22px; }
.styles svg { width: 8px; height: 8px; margin-right: .5px; }
.right h4 { height: 18px; line-height: 19px; padding-left: 9.500px; font-size: 6.100px; font-weight: 500; color: #b0b0b0; }
.styles-list { position: relative; top: .500px; }
.styles-list li { display: flex; align-items: center; height: 16.430px; padding-left: 9px; }
.styles-list svg { width: 6px; height: 6px; margin: 0 6.500px 0 1.500px; color: #999; }
.styles-list i { width: 8.600px; height: 8.600px; margin-right: 5.400px; border-radius: 50%; }
.styles-list .grad { width: 9px; height: 9px; margin-right: 5px; background: linear-gradient(#d9d9d9, #7d7d7d); }
.styles-list .solid { width: 9px; height: 9px; margin-right: 5px; background: #d9d9d9; }
.styles-list .sub { padding-left: 21.500px; }
.styles-list.fx { margin-top: .400px; }
.styles-list.fx i { width: 8px; height: 8px; margin: 0 5.400px 0 .600px; border: 1px solid #e3e3e3; border-radius: 1.500px; box-shadow: 0 1px 0 #9a9a9a; background: #222; }
.styles-list.fx i.all { box-shadow: 0 0 0 .800px #9a9a9a; }
.styles-list.fx i.thin { height: 7px; }
.styles-list.fx i.lft { box-shadow: -1px 0 0 #9a9a9a; }
.styles-list.fx i.rgt { box-shadow: 1.500px 0 0 #9a9a9a; }
.right .color-head { margin-top: 8.600px; }
.right .fx-head { margin-top: 7.700px; }
.help { position: absolute; left: 100.700px; top: 734px; width: 18px; height: 18px; border-radius: 50%; background: #1e1e1e; text-align: center; line-height: 18px; font-size: 9.500px; font-weight: 400; }
```
